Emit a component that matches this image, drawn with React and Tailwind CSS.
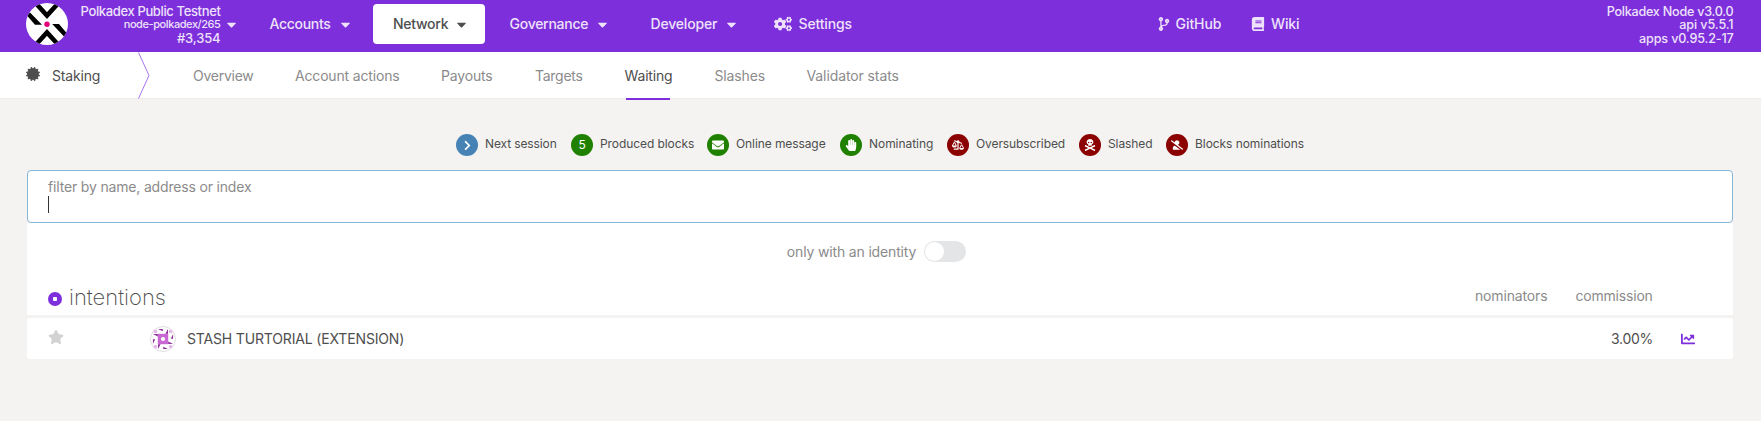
import {
  FaCaretDown, FaCogs, FaCodeBranch, FaBook, FaChevronRight, FaEnvelope, FaHandPaper,
  FaBalanceScaleRight, FaSkullCrossbones, FaUserSlash, FaStar, FaChartLine, FaCertificate,
} from "react-icons/fa";

const MENU = [
  { label: "Accounts", box: "ml-[34px] w-[120px] pl-[15.5px] pr-[24.5px]", text: "tracking-[-0.3px]" },
  { label: "Network", box: "ml-[-1px] w-[112px] pl-[20px] pr-[19px]", text: "tracking-[-0.27px]", active: true },
  { label: "Governance", box: "ml-[5px] w-[137px] pl-[19.5px] pr-[20px]", text: "tracking-[-0.26px]" },
  { label: "Developer", box: "ml-[4px] w-[125px] pl-[19.5px] pr-[20px]", text: "tracking-[-0.18px]" },
];

const TABS = [
  { label: "Overview", cls: "ml-[43px] w-[102px] tracking-[-0.26px]" },
  { label: "Account actions", cls: "w-[146px] tracking-[-0.17px]" },
  { label: "Payouts", cls: "w-[94px] tracking-[-0.17px]" },
  { label: "Targets", cls: "w-[89.5px] tracking-[-0.28px]" },
  { label: "Waiting", cls: "w-[90px] tracking-[-0.16px]", active: true },
  { label: "Slashes", cls: "w-[92px] tracking-[-0.14px]" },
  { label: "Validator stats", cls: "tracking-[-0.1px]" },
];

const LEGEND = [
  { label: "Next session", cls: "w-[115px] tracking-[-0.12px]", color: "bg-[#4682b4]", icon: <FaChevronRight size={11} /> },
  { label: "Produced blocks", cls: "w-[136px] tracking-[-0.08px]", color: "bg-[#208000]", icon: "5" },
  { label: "Online message", cls: "w-[133px] tracking-[-0.09px]", color: "bg-[#208000]", icon: <FaEnvelope size={12} /> },
  { label: "Nominating", cls: "w-[107px] tracking-[-0.05px]", color: "bg-[#208000]", icon: <FaHandPaper size={12} /> },
  { label: "Oversubscribed", cls: "w-[132px] tracking-[-0.1px]", color: "bg-[#8b0000]", icon: <FaBalanceScaleRight size={12} /> },
  { label: "Slashed", cls: "w-[87px] tracking-[-0.09px]", color: "bg-[#8b0000]", icon: <FaSkullCrossbones size={12} /> },
  { label: "Blocks nominations", cls: "tracking-[-0.06px]", color: "bg-[#8b0000]", icon: <FaUserSlash size={12} /> },
];

function Logo() {
  return (
    <svg className="ml-[26px] mt-[3px] size-[42px] shrink-0" viewBox="0 0 42 42">
      <defs><clipPath id="logo"><circle cx="21" cy="21" r="21" /></clipPath></defs>
      <g clipPath="url(#logo)">
        <rect width="42" height="42" fill="#fff" />
        <path d="M10 0.5 21 12.5 32 0.5M10 41.5 21 29.5 32 41.5" fill="none" stroke="#000" strokeWidth="4.6" />
        <path d="M0.5 12 9 21.8H16L4 9.5ZM41.5 31 33 21H26.2L38 33.5Z" />
        <circle cx="21" cy="21.3" r="2.7" fill="#e6007a" />
      </g>
    </svg>
  );
}

function Identicon() {
  return (
    <svg className="size-[26px] shrink-0" viewBox="0 0 26 26">
      <circle cx="13" cy="13" r="12.5" fill="#fff" stroke="#dedede" />
      <rect x="7.8" y="7.8" width="10.4" height="10.4" fill="#c869d3" />
      <circle cx="13" cy="13" r="2.1" fill="#fff" />
      {[0, 90, 180, 270].map((a) => (
        <g key={a} transform={`rotate(${a} 13 13)`}>
          <path d="M8 2.9H12.8V5.2ZM18 2.9V7.8H15.4Z" fill="#8f2f9c" />
          <circle cx="5.4" cy="5.4" r="1.9" fill="#e6b9ec" />
        </g>
      ))}
    </svg>
  );
}

function Header() {
  return (
    <header className="flex h-[52px] bg-[#7c2fdb] font-[450] text-[#eee2fa]">
      <Logo />
      <div className="mt-[4px] w-[152.5px] shrink-0 text-right">
        <div className="h-[14px] text-[13px] leading-[14px] tracking-[-0.36px]">Polkadex Public Testnet</div>
        <div className="h-[13px] text-[11px] leading-[13px] tracking-[-0.42px]">node-polkadex/265</div>
        <div className="h-[14px] text-[13px] leading-[14px] tracking-[-0.15px]">#3,354</div>
      </div>
      <FaCaretDown className="ml-[3.5px] mt-[17px] shrink-0" size={15} />
      <nav className="ml-[-19px] mt-[4px] flex h-[40px]">
        {MENU.map((m) => (
          <div
            key={m.label}
            className={`flex shrink-0 items-center justify-between rounded-[4px] ${m.box} ${m.active ? "bg-white text-[#4e4e4e]" : ""}`}
          >
            <span className={m.text}>{m.label}</span>
            <span className="flex w-[9px] justify-center"><FaCaretDown className="shrink-0" size={15} /></span>
          </div>
        ))}
        <div className="ml-[18px] flex shrink-0 items-center">
          <FaCogs size={18} />
          <span className="ml-[6.5px] tracking-[-0.14px]">Settings</span>
        </div>
      </nav>
      <div className="ml-auto mt-[4px] flex h-[40px] w-[210.5px] shrink-0 items-center">
        <span className="flex w-[17.5px]"><FaCodeBranch className="ml-[-1px]" size={14} /></span>
        <span className="w-[76.5px] tracking-[-0.05px]">GitHub</span>
        <span className="flex w-[19px]"><FaBook className="ml-[-1px]" size={14} /></span>
        <span className="tracking-[-0.1px]">Wiki</span>
      </div>
      <div className="mr-[27.5px] mt-[5px] w-[365px] shrink-0 text-right text-[12.6px] leading-[13.4px]">
        <div className="tracking-[-0.24px]">Polkadex Node v3.0.0</div>
        <div className="tracking-[-0.1px]">api v5.5.1</div>
        <div className="tracking-[-0.16px]">apps v0.95.2-17</div>
      </div>
    </header>
  );
}

function Tabs() {
  return (
    <div className="flex h-[47px] border-b border-[#eeecea] bg-white text-[#8b8b8b]">
      <div className="flex w-[138px] shrink-0 items-center pl-[26px] text-[#4e4e4e]">
        <FaCertificate className="mt-[-2px]" size={14} />
        <span className="ml-[12px] mt-[2px] tracking-[-0.17px]">Staking</span>
      </div>
      <svg className="h-[47px] w-[12px] shrink-0" viewBox="0 0 12 47">
        <path d="M0.5 0.5 11 23.5 0.5 46.5" fill="none" stroke="#a873ea" />
      </svg>
      {TABS.map((t) => (
        <div key={t.label} className={`relative flex shrink-0 items-center whitespace-nowrap pt-[2px] ${t.cls} ${t.active ? "text-[#4e4e4e]" : ""}`}>
          {t.label}
          {t.active && <span className="absolute left-[1px] top-[46px] h-[2px] w-[44px] bg-[#7c2fdb]" />}
        </div>
      ))}
    </div>
  );
}

export default function App() {
  return (
    <div className="h-[421px] overflow-hidden whitespace-nowrap bg-[#f4f3f1] font-['Inter','Noto_Sans',sans-serif] text-[14px] leading-[20px] text-[#4e4e4e] antialiased">
      <Header />
      <Tabs />
      <div className="ml-[456px] mt-[35px] flex h-[22px] text-[12px]">
        {LEGEND.map((l) => (
          <div key={l.label} className={`flex shrink-0 items-center ${l.cls}`}>
            <span className={`mr-[7px] flex size-[22px] items-center justify-center rounded-full text-white ${l.color}`}>{l.icon}</span>
            <span className="mt-[-2px]">{l.label}</span>
          </div>
        ))}
      </div>
      <main className="ml-[27px] mr-[28px] mt-[14px]">
        <div className="h-[53px] rounded-[4px] border border-[#85b7d9] bg-white pl-[20px] pt-[6px] text-[#8b8b8b]">
          <div className="tracking-[-0.17px]">filter by name, address or index</div>
          <div className="mt-[-1px] h-[17px] w-px bg-[#333]" />
        </div>
        <div className="flex h-[57px] items-center justify-center bg-white pr-[7px] text-[#8b8b8b]">
          <span className="tracking-[-0.16px]">only with an identity</span>
          <span className="ml-[8px] flex h-[21px] w-[42px] items-center rounded-full bg-[#e4e5e7] pl-px">
            <span className="size-[19px] rounded-full bg-white" />
          </span>
        </div>
        <div className="flex h-[35px] bg-white pl-[21px] text-[#8b8b8b]">
          <span className="mt-[12px] flex size-[14px] items-center justify-center rounded-full bg-[#7c2fdb]">
            <span className="size-[4px] rounded-[1px] bg-white" />
          </span>
          <h1 className="ml-[7px] mt-[4px] text-[22px] font-[200] leading-[26px] text-[#4e4e4e]">intentions</h1>
          <span className="ml-auto mt-[6px] w-[100.5px] tracking-[-0.15px]">nominators</span>
          <span className="mr-[81.5px] mt-[6px] w-[76px] tracking-[-0.2px]">commission</span>
        </div>
        <div className="mt-[3px] flex h-[41px] items-center rounded-[3px] bg-white pl-[21px]">
          <FaStar className="mt-[-3px] shrink-0 text-[#d3d3d3]" size={16} />
          <span className="ml-[86px] flex"><Identicon /></span>
          <span className="ml-[11px] tracking-[-0.16px]">STASH TURTORIAL (EXTENSION)</span>
          <span className="ml-auto tracking-[-0.28px]">3.00%</span>
          <FaChartLine className="ml-[28px] mr-[38px] mt-[1px] shrink-0 text-[#7c2fdb]" size={14} />
        </div>
      </main>
    </div>
  );
}
